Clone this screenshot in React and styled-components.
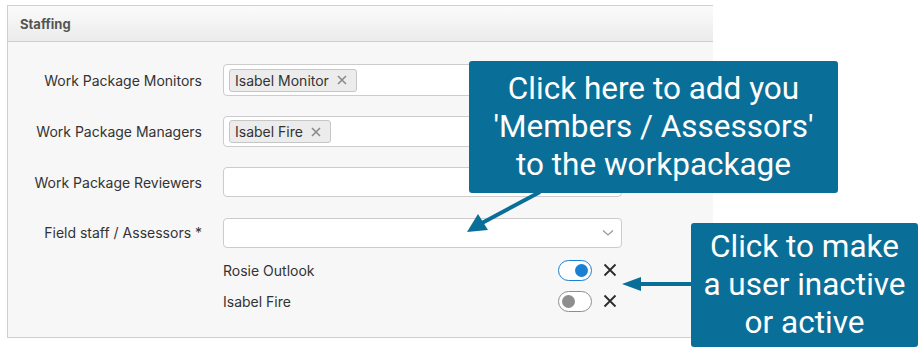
import React from "react";
import styled, { createGlobalStyle } from "styled-components";

const Global = createGlobalStyle`
  html, body { margin: 0; padding: 0; background: #ffffff; }
  body { font-family: Inter, "Noto Sans", "Liberation Sans", sans-serif; }
`;

const Page = styled.div`
  position: relative;
  width: 921px;
  height: 349px;
  padding: 5px 0 0 7px;
  box-sizing: border-box;
  overflow: hidden;
`;

const Panel = styled.section`
  width: 706px;
  height: 333px;
  box-sizing: border-box;
  border: 1px solid #cfcfcf;
  border-right: none;
  background: #f7f7f7;
`;

const PanelHeader = styled.header`
  height: 36px;
  box-sizing: border-box;
  border-bottom: 1px solid #cdcdcd;
  background: linear-gradient(#fbfbfb, #ebebeb);
  display: flex;
  align-items: center;
  padding-left: 12px;
  padding-top: 1px;
  font-size: 13px;
  font-weight: 700;
  color: #555;
`;

const Form = styled.div`
  display: grid;
  grid-template-columns: 194px 399px;
  column-gap: 21px;
  row-gap: 20px;
  padding-top: 22px;
  align-items: center;
`;

const Label = styled.label`
  text-align: right;
  font-size: 14px;
  color: #333;
`;

const Input = styled.div`
  height: ${(p) => p.$h}px;
  box-sizing: border-box;
  border: 1px solid #cccccc;
  border-radius: 4px;
  background: #fff;
  display: flex;
  align-items: center;
  padding: 0 5px;
  gap: 4px;
  margin-top: ${(p) => p.$mt || 0}px;
`;

const Tag = styled.span`
  height: 23px;
  box-sizing: border-box;
  display: inline-flex;
  align-items: center;
  gap: 8px;
  padding: 0 9px 0 5px;
  border: 1px solid #c6c6c6;
  border-radius: 3px;
  background: #ececec;
  font-size: 14px;
  color: #333;
`;

const Chevron = styled.svg`
  margin-left: auto;
  margin-right: 2px;
`;

const Members = styled.div`
  grid-column: 2;
  display: flex;
  flex-direction: column;
  gap: 11px;
  margin-top: -8px;
`;

const MemberRow = styled.div`
  display: flex;
  align-items: center;
  height: 20px;
  font-size: 14px;
  color: #333;
`;

const Name = styled.span`
  flex: 1;
`;

const Toggle = styled.span`
  width: 34px;
  height: 21px;
  box-sizing: border-box;
  border-radius: 11px;
  border: 1.5px solid ${(p) => (p.$on ? "#1a80d4" : "#8e8e8e")};
  background: #fff;
  display: flex;
  align-items: center;
  justify-content: ${(p) => (p.$on ? "flex-end" : "flex-start")};
  padding: 0 3px;
  &::after {
    content: "";
    width: 13px;
    height: 13px;
    border-radius: 50%;
    background: ${(p) => (p.$on ? "#1a80d4" : "#8e8e8e")};
  }
`;

const Remove = styled.svg`
  margin-left: 11px;
  margin-right: 5px;
`;

const Callout = styled.div`
  position: absolute;
  left: ${(p) => p.$x}px;
  top: ${(p) => p.$y}px;
  width: ${(p) => p.$w}px;
  height: ${(p) => p.$h}px;
  box-sizing: border-box;
  background: #0a6f98;
  border-radius: 3px;
  color: #fff;
  font-family: Roboto, "Liberation Sans", sans-serif;
  font-size: 31.5px;
  line-height: 38px;
  text-align: center;
  display: flex;
  flex-direction: column;
  justify-content: center;
`;

const ArrowSvg = styled.svg`
  position: absolute;
  left: 0;
  top: 0;
  pointer-events: none;
`;

const fields = [
  { label: "Work Package Monitors", h: 32, tags: ["Isabel Monitor"] },
  { label: "Work Package Managers", h: 31, tags: ["Isabel Fire"] },
  { label: "Work Package Reviewers", h: 30, tags: [] },
];

const members = [
  { name: "Rosie Outlook", on: true },
  { name: "Isabel Fire", on: false },
];

export default function App() {
  return (
    <>
      <Global />
      <Page>
        <Panel>
          <PanelHeader>Staffing</PanelHeader>
          <Form>
            {fields.map((f) => (
              <React.Fragment key={f.label}>
                <Label>{f.label}</Label>
                <Input $h={f.h}>
                  {f.tags.map((t) => (
                    <Tag key={t}>
                      {t}
                      <svg width="10" height="10" viewBox="0 0 10 10">
                        <path d="M1 1 L9 9 M9 1 L1 9" stroke="#8a8a8a" strokeWidth="1.6" />
                      </svg>
                    </Tag>
                  ))}
                </Input>
              </React.Fragment>
            ))}
            <Label>Field staff / Assessors *</Label>
            <Input $h={30} $mt={1}>
              <Chevron width="12" height="8" viewBox="0 0 12 8">
                <path d="M1 1.5 L6 6 L11 1.5" fill="none" stroke="#999" strokeWidth="1.3" />
              </Chevron>
            </Input>
            <Members>
              {members.map((m) => (
                <MemberRow key={m.name}>
                  <Name>{m.name}</Name>
                  <Toggle $on={m.on} />
                  <Remove width="14" height="14" viewBox="0 0 14 14">
                    <path d="M1.5 1.5 L12.5 12.5 M12.5 1.5 L1.5 12.5" stroke="#2a2a2a" strokeWidth="1.8" />
                  </Remove>
                </MemberRow>
              ))}
            </Members>
          </Form>
        </Panel>

        <ArrowSvg width="921" height="349" viewBox="0 0 921 349">
          <line x1="540" y1="192" x2="482" y2="223" stroke="#0a6f98" strokeWidth="4" />
          <polygon points="467,232 478,214 488,230" fill="#0a6f98" />
          <line x1="692" y1="284" x2="640" y2="284" stroke="#0a6f98" strokeWidth="4" />
          <polygon points="622,284 641,277 641,291" fill="#0a6f98" />
        </ArrowSvg>

        <Callout $x={469} $y={61} $w={369} $h={132}>
          <div>Click here to add you</div>
          <div>'Members / Assessors'</div>
          <div>to the workpackage</div>
        </Callout>
        <Callout $x={691} $y={223} $w={227} $h={124}>
          <div>Click to make</div>
          <div>a user inactive</div>
          <div>or active</div>
        </Callout>
      </Page>
    </>
  );
}
